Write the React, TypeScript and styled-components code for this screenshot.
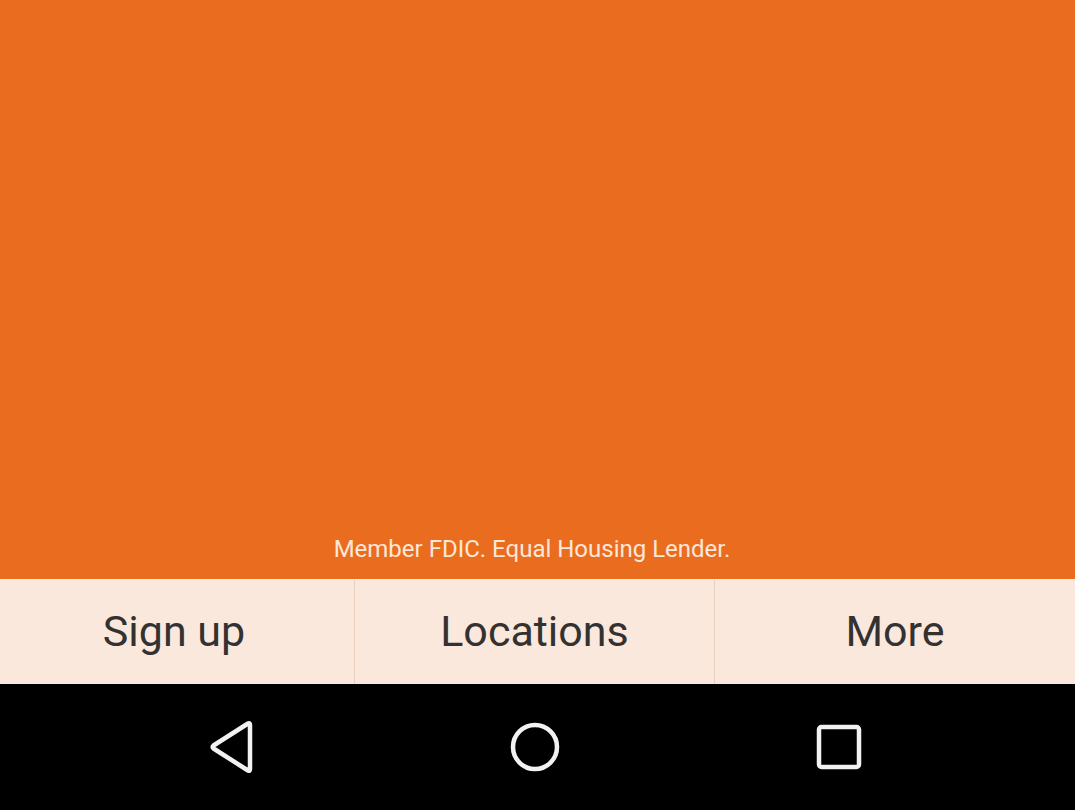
import React from "react";
import styled, { createGlobalStyle } from "styled-components";

const Global = createGlobalStyle`
  html, body { margin: 0; padding: 0; height: 100%; }
  body { font-family: Roboto, "Liberation Sans", sans-serif; overflow: hidden; }
  #root { height: 100%; }
`;

const Screen = styled.div`
  display: flex;
  flex-direction: column;
  width: 1075px;
  height: 810px;
`;

const Hero = styled.main`
  flex: 1;
  background: #ea6d1f;
  display: flex;
  flex-direction: column;
  justify-content: flex-end;
  align-items: center;
  padding-bottom: 16px;
`;

const Disclaimer = styled.p`
  margin: 0;
  font-size: 24px;
  line-height: 28px;
  color: #fce7da;
  padding-right: 11px;
`;

const TabBar = styled.nav`
  height: 105px;
  display: grid;
  grid-template-columns: 354px 360px 1fr;
  background: #fbe8dd;
  border-top: 1px solid #fdf0e8;
  box-sizing: border-box;
`;

const Tab = styled.button<{ $divider?: boolean }>`
  all: unset;
  display: flex;
  align-items: center;
  justify-content: center;
  font-family: Roboto, "Liberation Sans", sans-serif;
  font-size: 43px;
  color: #333231;
  border-left: ${(p) => (p.$divider ? "1px solid #ead0bf" : "none")};
  padding-bottom: 2px;
`;

const FirstTab = styled(Tab)`
  padding-right: 6px;
`;

const NavBar = styled.div`
  height: 126px;
  background: #000;
  display: grid;
  grid-template-columns: repeat(3, 304px);
  justify-content: center;
  align-items: center;
  justify-items: center;
  padding-right: 6px;
`;

const NavIcon = styled.svg`
  display: block;
  color: #f2f2f2;
`;

export default function App() {
  return (
    <>
      <Global />
      <Screen>
        <Hero>
          <Disclaimer>Member FDIC. Equal Housing Lender.</Disclaimer>
        </Hero>
        <TabBar>
          <FirstTab>Sign up</FirstTab>
          <Tab $divider>Locations</Tab>
          <Tab $divider>More</Tab>
        </TabBar>
        <NavBar>
          <NavIcon width="50" height="54" viewBox="0 0 50 54">
            <path
              d="M44 5 L44 49 Q44 51.5 42 50.5 L7.5 28.5 Q6 27 7.5 25.5 L42 3.5 Q44 2.5 44 5 Z"
              fill="none"
              stroke="currentColor"
              strokeWidth="4.5"
              strokeLinejoin="round"
            />
          </NavIcon>
          <NavIcon width="56" height="56" viewBox="0 0 56 56">
            <circle cx="28" cy="28" r="22" fill="none" stroke="currentColor" strokeWidth="4.5" />
          </NavIcon>
          <NavIcon width="50" height="50" viewBox="0 0 50 50">
            <rect x="5" y="5" width="40" height="40" rx="2.5" fill="none" stroke="currentColor" strokeWidth="4.5" />
          </NavIcon>
        </NavBar>
      </Screen>
    </>
  );
}
